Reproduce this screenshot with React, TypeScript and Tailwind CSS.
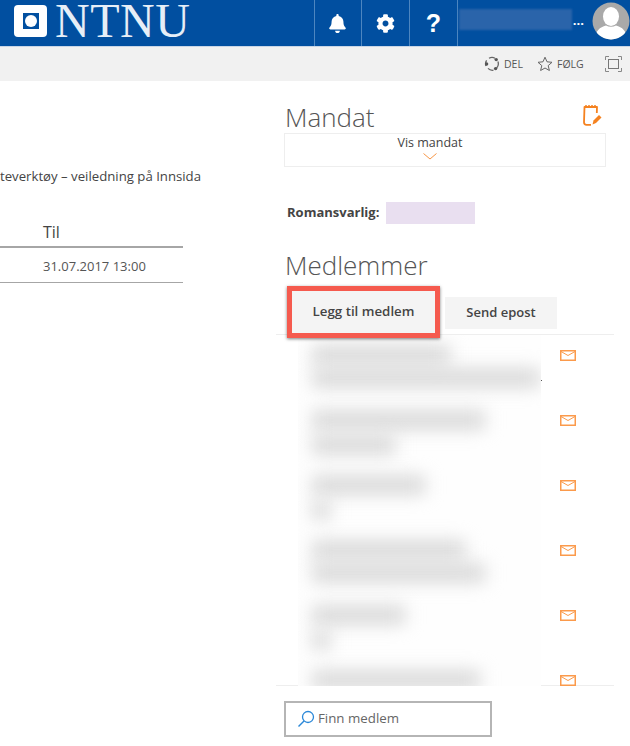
import React from "react";
import { FaBell, FaCog } from "react-icons/fa";

function Divider() {
  return <div className="w-px h-[46px] bg-[#4d86c0]" />;
}

function NavCell({ children, wide }: { children: React.ReactNode; wide?: boolean }) {
  return <div className={wide ? "w-[47px] h-[46px] flex items-center justify-center text-white" : "w-[46px] h-[46px] flex items-center justify-center text-white"}>{children}</div>;
}

function Avatar() {
  return (
    <svg width="38" height="38" viewBox="0 0 38 38" className="block">
      <defs>
        <clipPath id="av"><circle cx="19" cy="19" r="18.5" /></clipPath>
      </defs>
      <circle cx="19" cy="19" r="18.5" fill="#a9a9a9" />
      <g clipPath="url(#av)" fill="#fff">
        <ellipse cx="19" cy="14.5" rx="8" ry="9.5" />
        <path d="M3 38c0-9 5-13 11-14.5 3 1.6 7 1.6 10 0C30 25 35 29 35 38z" />
      </g>
    </svg>
  );
}

function MailIcon() {
  return (
    <svg width="16" height="11" viewBox="0 0 16 11" fill="none" className="block">
      <rect x="0.75" y="0.75" width="14.5" height="9.5" fill="#fff" stroke="#fb9a4b" strokeWidth="1.5" />
      <path d="M1 1.500l7 4 7-4" stroke="#fb9a4b" />
    </svg>
  );
}

function Bars({ rows }: { rows: [number, number][] }) {
  return (
    <div className="h-[65px] pl-[14px] flex flex-col">
      {rows.map(([w, mt], i) => (
        <div key={i} style={{ width: w, marginTop: mt }} className="h-[18px] shrink-0 bg-[#d6d6d6] blur-[9px]" />
      ))}
    </div>
  );
}

export default function App() {
  return (
    <div className="w-[630px] h-[746px] overflow-hidden bg-white font-['Open_Sans',sans-serif] text-[#444]">
      <header className="h-[47px] bg-[#014fa0] border-b border-[#c9d6e6] flex items-start">
        <div className="w-[314px] h-[46px] flex items-start pl-[14px] pt-[5px]">
          <div className="w-[33px] h-[32px] rounded-[4px] bg-white flex items-center justify-center">
            <div className="w-[16px] h-[16px] bg-[#014fa0] flex items-center justify-center">
              <div className="w-[12px] h-[12px] rounded-full bg-white" />
            </div>
          </div>
          <span className="ml-[8px] font-['Liberation_Serif',serif] text-[48px] tracking-[0.5px] leading-[32px] text-[#e6eef7]">NTNU</span>
        </div>
        <Divider />
        <NavCell><FaBell size={19} /></NavCell>
        <Divider />
        <NavCell wide><FaCog size={19} /></NavCell>
        <Divider />
        <NavCell wide><span className="font-['Liberation_Sans',sans-serif] font-bold text-[25px] leading-none">?</span></NavCell>
        <Divider />
        <div className="w-[113px] h-[21px] mt-[9px] ml-px bg-[#2a64aa] blur-[1px]" />
        <span className="ml-[1px] mt-[12px] text-white text-[13px] leading-[16px] font-bold">...</span>
        <div className="ml-[8px] mt-[2px]"><Avatar /></div>
      </header>

      <div className="h-[34px] bg-[#f1f1f1] flex items-center text-[#555] text-[10.5px]">
        <svg width="16" height="16" viewBox="0 0 16 16" fill="none" className="ml-[484px]">
          <path d="M5 2.2A6.3 6.3 0 0 1 11 2.2M13.9 5.6a6.3 6.3 0 0 1-1.4 6.6M9.5 14.2a6.3 6.3 0 0 1-5.5-1.8M2 10a6.3 6.3 0 0 1 .6-5.7" stroke="#666" strokeWidth="1.3" />
          <circle cx="12.2" cy="3.6" r="1.7" fill="#555" />
          <circle cx="11.6" cy="12.6" r="1.7" fill="#555" />
          <circle cx="2.6" cy="8" r="1.7" fill="#555" />
        </svg>
        <span className="ml-[4px] w-[33px] pt-[1px]">DEL</span>
        <svg width="16" height="16" viewBox="0 0 16 16" fill="none">
          <path d="M8 1.2l2 4.6 5 .5-3.8 3.3 1.2 4.9L8 12l-4.4 2.5 1.2-4.9L1 6.300l5-.5z" stroke="#666" strokeWidth="1" strokeLinejoin="round" />
        </svg>
        <span className="ml-[4px] w-[48px] pt-[1px]">FØLG</span>
        <svg width="17" height="16" viewBox="0 0 17 16" fill="none">
          <path d="M.5 4V.5H4M13 .5h3.500V4M16.500 12v3.500H13M4 15.500H.5V12" stroke="#888" />
          <rect x="3.500" y="3.500" width="10" height="9" stroke="#777" />
        </svg>
      </div>

      <main className="flex">
        <section className="w-[276px] shrink-0 overflow-hidden">
          <p className="mt-[85px] text-[13.2px] leading-[20px] text-[#444] whitespace-nowrap">teverktøy – veiledning på Innsida</p>
          <div className="w-[183px] mt-[35px]">
            <div className="h-[27px] pl-[43px] text-[16px] leading-[22px] border-b-2 border-[#a6a6a6] text-[#444]">Til</div>
            <div className="h-[35px] pl-[43px] border-b border-[#a6a6a6] text-[13px] leading-[36px] text-[#555]">31.07.2017 13:00</div>
          </div>
        </section>

        <section className="w-[338px] shrink-0">
          <div className="h-[52px] pt-[18px] pl-[9px] pr-[13px] flex items-start justify-between">
            <h2 className="text-[26px] leading-[36px] font-light text-[#555]">Mandat</h2>
            <svg width="20" height="23" viewBox="0 0 20 23" fill="none" className="mt-[5px] mr-[-1px]">
              <path d="M9 20.800H4.500q-2.500 0-2.500-2.500L2.500 3h12.500l-.2 6" stroke="#f58220" strokeWidth="1.800" strokeLinejoin="round" />
              <path d="M4 1v2M7 1v2M10 1v2M13 1v2" stroke="#f58220" strokeWidth="1.500" />
              <path d="M10.500 20.500l1-4L17 11l2.500 2.500L14 19z" fill="#f58220" />
            </svg>
          </div>
          <div className="ml-[8px] w-[322px] h-[34px] border border-[#eeeeee] flex flex-col items-center pr-[30px]">
            <span className="text-[12.5px] leading-[16px] mt-[1px] text-[#444]">Vis mandat</span>
            <svg width="14" height="7" viewBox="0 0 14 7" fill="none" className="mt-[2px]">
              <path d="M.5.5L7 6l6.500-5.500" stroke="#f79646" />
            </svg>
          </div>

          <div className="mt-[35px] ml-[11px] h-[22px] flex items-center">
            <span className="text-[13px] font-bold text-[#444] w-[99px]">Romansvarlig:</span>
            <div className="w-[89px] h-[22px] bg-[#e9dff0]" />
          </div>

          <h2 className="mt-[24px] ml-[9px] h-[34px] text-[26px] leading-[34px] font-light text-[#555]">Medlemmer</h2>

          <div className="h-[48px] mt-[4px] ml-[11px] flex items-start">
            <button className="relative z-10 w-[153px] h-[52px] border-[5px] border-[#f55a4e] bg-[#f4f4f4] shadow-[0_1px_3px_rgba(0,0,0,0.5)] text-[13.3px] font-semibold text-[#444]">Legg til medlem</button>
            <button className="w-[112px] h-[32px] ml-[5px] mt-[11px] bg-[#f4f4f4] text-[13px] font-semibold text-[#444]">Send epost</button>
          </div>

          <div className="h-[352px] border-t border-[#eeeeee] overflow-hidden flex bg-[linear-gradient(#eeeeee,#eeeeee)] bg-no-repeat bg-bottom bg-[length:100%_1px]">
            <div className="ml-[22px] w-[243px] bg-[#fefefe] overflow-hidden">
              <Bars rows={[[138, 11], [228, 5]]} />
              <Bars rows={[[173, 11], [83, 7]]} />
              <Bars rows={[[113, 11], [18, 7]]} />
              <Bars rows={[[153, 11], [173, 5]]} />
              <Bars rows={[[93, 11], [18, 7]]} />
              <Bars rows={[[168, 11]]} />
            </div>
            <div className="pl-[19px]">
              {[0, 1, 2, 3, 4, 5].map((i) => (
                <div key={i} className="h-[65px] pt-[15px]">
                  <MailIcon />
                  {i === 0 && <div className="w-px h-px bg-[#555] -ml-[19px] mt-[19px]" />}
                </div>
              ))}
            </div>
          </div>

          <div className="mt-[15px] ml-[8px] w-[208px] h-[36px] border-2 border-[#b5b5b5] flex items-center pl-[11px]">
            <svg width="18" height="18" viewBox="0 0 18 18" fill="none">
              <circle cx="11" cy="7" r="5.500" stroke="#2b88d8" strokeWidth="1.300" />
              <path d="M7 11l-5.500 5.500" stroke="#2b88d8" strokeWidth="1.500" />
            </svg>
            <span className="ml-[3px] text-[13.3px] text-[#666]">Finn medlem</span>
          </div>
        </section>
      </main>
    </div>
  );
}
